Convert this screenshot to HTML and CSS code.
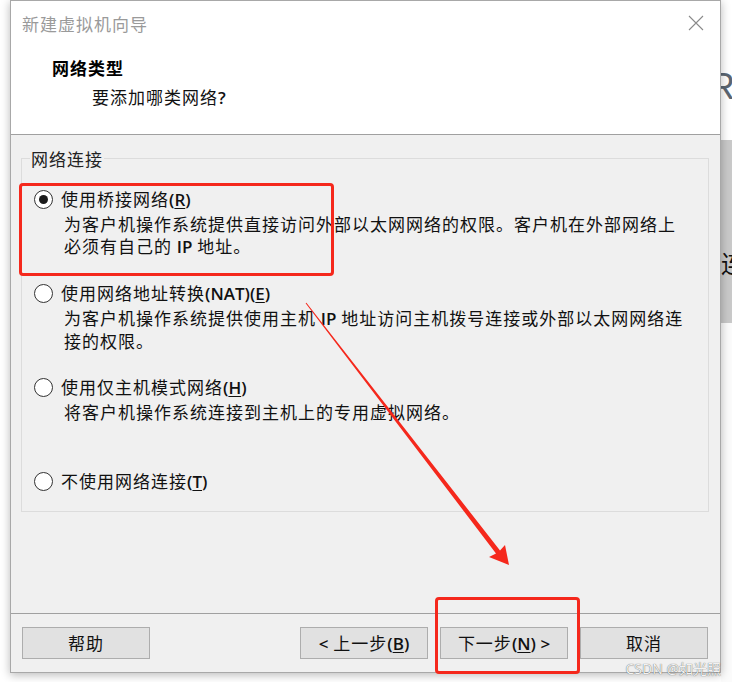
FILE: index.html
```html
<!DOCTYPE html>
<html lang="zh-CN">
<head>
<meta charset="utf-8">
<title>新建虚拟机向导</title>
<link rel="stylesheet" href="styles.css">
</head>
<body>
<div class="screen">
  <div class="gutter"></div>
  <div class="dialog">
    <div class="titlebar">
      <span class="title">新建虚拟机向导</span>
      <svg class="close" width="16" height="16" viewBox="0 0 16 16"><path d="M1 1 L15 15 M15 1 L1 15" stroke="#8a8a8a" stroke-width="1.1" fill="none"/></svg>
    </div>
    <div class="header">
      <div class="h-title">网络类型</div>
      <div class="h-sub">要添加哪类网络<span class="lat">?</span></div>
    </div>
    <div class="sep"></div>
    <div class="body">
      <div class="group">
        <span class="legend">网络连接</span>
        <div class="options">
          <div class="option">
            <div class="opt-row"><span class="radio checked"></span><span>使用桥接网络<span class="lat">(<u>R</u>)</span></span></div>
            <div class="desc">为客户机操作系统提供直接访问外部以太网网络的权限。客户机在外部网络上<br>必须有自己的 <span class="lat">IP</span> 地址。</div>
          </div>
          <div class="option">
            <div class="opt-row"><span class="radio"></span><span>使用网络地址转换<span class="lat">(NAT)(<u>E</u>)</span></span></div>
            <div class="desc">为客户机操作系统提供使用主机 <span class="lat">IP</span> 地址访问主机拨号连接或外部以太网网络连<br>接的权限。</div>
          </div>
          <div class="option">
            <div class="opt-row"><span class="radio"></span><span>使用仅主机模式网络<span class="lat">(<u>H</u>)</span></span></div>
            <div class="desc">将客户机操作系统连接到主机上的专用虚拟网络。</div>
          </div>
          <div class="option last">
            <div class="opt-row"><span class="radio"></span><span>不使用网络连接<span class="lat">(<u>T</u>)</span></span></div>
          </div>
        </div>
      </div>
    </div>
    <div class="sep"></div>
    <div class="footer">
      <button class="btn">帮助</button>
      <div class="spacer"></div>
      <button class="btn"><span class="lat">&lt;</span> 上一步<span class="lat">(<u>B</u>)</span></button>
      <button class="btn">下一步<span class="lat">(<u>N</u>) &gt;</span></button>
      <button class="btn">取消</button>
    </div>
  </div>
  <div class="behind">
    <div class="behind-top"><span class="bg-r">R</span></div>
    <div class="behind-mid"><span class="bg-lian">连</span></div>
    <div class="behind-bottom"></div>
  </div>
</div>

<div class="mark mark-1"></div>
<div class="mark mark-2"></div>
<svg class="arrow" width="732" height="682" viewBox="0 0 732 682">
  <polygon points="306.4,302.7 500,550.5 505,545 509,565 489,557 496,553.5 305.6,303.3" fill="#f5281c"/>
</svg>
<div class="watermark">CSDN @如光照</div>
</body>
</html>
```

FILE: styles.css
```css
* { box-sizing: border-box; }
html, body {
  margin: 0;
  padding: 0;
  background: #ffffff;
}
body {
  width: 732px;
  height: 682px;
  position: relative;
  overflow: hidden;
  font-family: "Noto Sans CJK SC", "Noto Sans", sans-serif;
  font-size: 17px;
  color: #111;
}
.screen {
  display: flex;
  width: 732px;
  height: 682px;
}
.gutter {
  width: 10px;
  flex: none;
}
.dialog {
  width: 711px;
  height: 673px;
  flex: none;
  border: 1px solid #a8a8a8;
  background: #f0f0f0;
  display: flex;
  flex-direction: column;
  position: relative;
  z-index: 1;
  box-shadow: 0 2px 9px rgba(0, 0, 0, 0.28);
}
.lat {
  font-family: "Open Sans", "Noto Sans", sans-serif;
  font-weight: 600;
  letter-spacing: 0;
}
u { text-decoration-thickness: 1px; text-underline-offset: 2px; }

.titlebar {
  height: 44px;
  flex: none;
  background: #fff;
  display: flex;
  align-items: center;
  justify-content: space-between;
  padding: 0 16px 0 11px;
}
.title {
  color: #9a9a9a;
  font-size: 17px;
  letter-spacing: 1px;
}
.header {
  height: 89px;
  flex: none;
  background: #fff;
  padding: 12px 0 0 41px;
}
.h-title {
  font-weight: 700;
  line-height: 22px;
  letter-spacing: 1px;
  color: #000;
}
.h-sub {
  margin: 7px 0 0 40px;
  line-height: 22px;
  letter-spacing: 1px;
  color: #111;
}
.sep {
  height: 1px;
  flex: none;
  background: #a0a0a0;
}
.body {
  flex: 1;
  padding: 23px 11px 0 10px;
}
.group {
  height: 354px;
  border: 1px solid #dcdcdc;
}
.legend {
  display: block;
  width: fit-content;
  margin: -11px 0 0 8px;
  padding: 0 1px;
  background: #f0f0f0;
  line-height: 22px;
  letter-spacing: 1px;
  color: #222;
}
.options {
  padding: 18px 0 0 12px;
}
.option {
  height: 94px;
}
.option.last { height: auto; }
.opt-row {
  display: flex;
  align-items: center;
  gap: 8px;
  line-height: 22px;
  letter-spacing: 1px;
  color: #111;
}
.radio {
  width: 19px;
  height: 19px;
  border: 1px solid #333;
  border-radius: 50%;
  background: #fff;
  flex: none;
  display: flex;
  align-items: center;
  justify-content: center;
}
.radio.checked::after {
  content: "";
  width: 9px;
  height: 9px;
  border-radius: 50%;
  background: #1a1a1a;
}
.desc {
  margin: 2px 0 0 30px;
  line-height: 22px;
  letter-spacing: 1px;
  color: #111;
}
.footer {
  height: 58px;
  flex: none;
  display: flex;
  align-items: flex-start;
  gap: 12px;
  padding: 13px 12px 0 11px;
}
.spacer { flex: 1; }
.btn {
  width: 128px;
  height: 32px;
  border: 1px solid #adadad;
  background: #e1e1e1;
  font-family: "Noto Sans CJK SC", "Noto Sans", sans-serif;
  font-size: 17px;
  color: #111;
  letter-spacing: 1px;
  padding: 0;
  line-height: 22px;
}
.behind {
  flex: 1;
  display: flex;
  flex-direction: column;
  overflow: hidden;
}
.behind-top {
  height: 140px;
  background: #fff;
  padding-top: 66px;
}
.bg-r {
  display: block;
  font-family: "Liberation Sans", sans-serif;
  font-size: 36px;
  font-weight: 300;
  line-height: 42px;
  color: #5b6672;
  margin-left: -12px;
}
.behind-mid {
  height: 183px;
  background: #c9c9c9;
  padding-top: 108px;
}
.bg-lian {
  display: block;
  font-size: 24px;
  line-height: 30px;
  color: #111;
  margin-left: 0;
}
.behind-bottom {
  flex: 1;
  background: #fbfbfb;
}
.mark {
  position: absolute;
  border: 3px solid #f5281c;
  border-radius: 4px;
  z-index: 5;
}
.mark-1 {
  left: 19px;
  top: 183px;
  width: 315px;
  height: 93px;
}
.mark-2 {
  left: 435px;
  top: 597px;
  width: 145px;
  height: 77px;
}
.arrow {
  position: absolute;
  left: 0;
  top: 0;
  z-index: 6;
}
.watermark {
  position: absolute;
  right: 11px;
  top: 659px;
  z-index: 7;
  font-family: "Noto Sans", "Noto Sans CJK SC", sans-serif;
  font-size: 14px;
  line-height: 20px;
  color: #f2f2f2;
  text-shadow: 0 0 1px rgba(0, 0, 0, 0.75);
}
```
